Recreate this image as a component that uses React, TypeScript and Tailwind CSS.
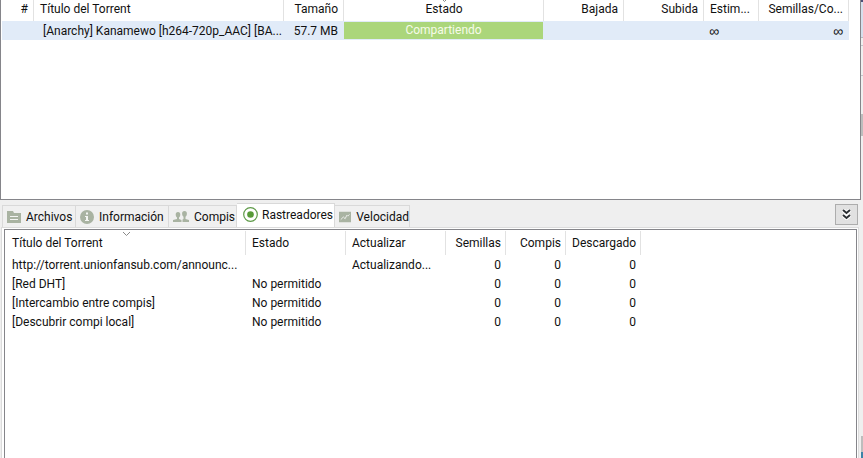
import { useState } from 'react';
import type { ReactNode } from 'react';

type Align = 'left' | 'center' | 'right';
type Column = { label: string; width: string; align: Align };

const torrentColumns: Column[] = [
  { label: '#', width: 'w-8', align: 'right' },
  { label: 'Título del Torrent', width: 'w-[250px]', align: 'left' },
  { label: 'Tamaño', width: 'w-[60px]', align: 'right' },
  { label: 'Estado', width: 'w-[200px]', align: 'center' },
  { label: 'Bajada', width: 'w-20', align: 'right' },
  { label: 'Subida', width: 'w-20', align: 'right' },
  { label: 'Estim...', width: 'w-[55px]', align: 'left' },
  { label: 'Semillas/Co...', width: 'w-[90px]', align: 'right' },
];

const trackerColumns: Column[] = [
  { label: 'Título del Torrent', width: 'w-60', align: 'left' },
  { label: 'Estado', width: 'w-[100px]', align: 'left' },
  { label: 'Actualizar', width: 'w-[100px]', align: 'left' },
  { label: 'Semillas', width: 'w-[60px]', align: 'right' },
  { label: 'Compis', width: 'w-[60px]', align: 'right' },
  { label: 'Descargado', width: 'w-[75px]', align: 'right' },
];

const trackers = [
  ['http://torrent.unionfansub.com/announc...', '', 'Actualizando...', '0', '0', '0'],
  ['[Red DHT]', 'No permitido', '', '0', '0', '0'],
  ['[Intercambio entre compis]', 'No permitido', '', '0', '0', '0'],
  ['[Descubrir compi local]', 'No permitido', '', '0', '0', '0'],
];

const alignClass: Record<Align, string> = {
  left: 'text-left',
  center: 'text-center',
  right: 'text-right',
};

function FolderIcon() {
  return (
    <svg width="14" height="12" viewBox="0 0 14 12" aria-hidden="true">
      <path d="M0 0h6l1 2h7v10H0z" fill="#a9b3a2" />
      <path d="M3 5.500h8M3 8.500h8" stroke="#f4f5f3" />
    </svg>
  );
}

function InfoIcon() {
  return (
    <svg width="14" height="14" viewBox="0 0 14 14" aria-hidden="true">
      <circle cx="7" cy="7" r="7" fill="#a9b3a2" />
      <path d="M6 2.500h2v2H6zM5 6h3v4h1v1H5v-1h1V7H5z" fill="#f4f5f3" />
    </svg>
  );
}

function PeersIcon() {
  return (
    <svg width="16" height="12" viewBox="0 0 16 12" fill="#a9b3a2" aria-hidden="true">
      <path d="M5 1c1.600 0 2.300 1 2.300 2.500S6.600 6 6 6.500V8l2.500 1v2H0V9l4-1V6.500C3.400 6 2.700 5 2.700 3.500S3.400 1 5 1z" />
      <path d="M11.500 0c1.700 0 2.400 1.100 2.400 2.700 0 1.500-.8 2.600-1.400 3.100V8l3.500 1v2H9.500V8.500l1-.5V5.800C9.900 5.300 9.100 4.200 9.100 2.700 9.100 1.100 9.800 0 11.500 0z" />
    </svg>
  );
}

function TrackerIcon() {
  return (
    <svg width="15" height="15" viewBox="0 0 15 15" aria-hidden="true">
      <circle cx="7.500" cy="7.500" r="6.800" fill="#fff" stroke="#5e9a48" strokeWidth="1.200" />
      <circle cx="7.500" cy="7.500" r="3.300" fill="#579a38" />
    </svg>
  );
}

function SpeedIcon() {
  return (
    <svg width="14" height="12" viewBox="0 0 14 12" aria-hidden="true">
      <path d="M0 0h14v12H0z" fill="#a9b3a2" />
      <path d="M2 9l3-3 2 2 2-4 1 1 2-2" fill="none" stroke="#f4f5f3" />
    </svg>
  );
}

const tabs: { label: string; width: string; icon: ReactNode }[] = [
  { label: 'Archivos', width: 'w-[74px]', icon: <FolderIcon /> },
  { label: 'Información', width: 'w-[93px]', icon: <InfoIcon /> },
  { label: 'Compis', width: 'w-[68px]', icon: <PeersIcon /> },
  { label: 'Rastreadores', width: 'w-[98px]', icon: <TrackerIcon /> },
  { label: 'Velocidad', width: 'w-[75px]', icon: <SpeedIcon /> },
];

function SortMark({ className }: { className: string }) {
  return (
    <svg className={`absolute ${className}`} width="7" height="4" viewBox="0 0 7 4" aria-hidden="true">
      <path d="M0 0l3.500 3.500L7 0" fill="none" stroke="#8a8a8a" />
    </svg>
  );
}

function Columns({ columns }: { columns: Column[] }) {
  return (
    <colgroup>
      {columns.map((c) => (
        <col key={c.label} className={c.width} />
      ))}
    </colgroup>
  );
}

function TorrentList() {
  return (
    <section className="h-[200px] border-x border-b border-[#85858a] bg-white pl-px">
      <table className="w-[847px] table-fixed border-separate border-spacing-0">
        <Columns columns={torrentColumns} />
        <thead>
          <tr className="h-[21px]">
            {torrentColumns.map((c) => (
              <th
                key={c.label}
                className={`relative border-r border-[#e2e2e2] pr-[5px] pb-[3px] pl-1.5 font-normal whitespace-nowrap ${alignClass[c.align]}`}
              >
                {c.label}
                {c.label === 'Estado' && <SortMark className="-top-[2px] left-[97px]" />}
              </th>
            ))}
          </tr>
        </thead>
        <tbody>
          <tr className="h-[19px] bg-[#e1ebf8] whitespace-nowrap">
            <td />
            <td className="pl-[9px]">[Anarchy] Kanamewo [h264-720p_AAC] [BA...</td>
            <td className="pr-1.5 text-right">57.7 MB</td>
            <td className="py-px pr-px">
              <div className="h-[17px] bg-[#abd67b] text-center leading-[17px] text-[#f6fbe9]">Compartiendo</div>
            </td>
            <td />
            <td />
            <td className="pl-[5px] font-['Liberation_Sans'] text-sm leading-4">∞</td>
            <td className="pr-1.5 text-right font-['Liberation_Sans'] text-sm leading-4">∞</td>
          </tr>
        </tbody>
      </table>
    </section>
  );
}

function TrackerTable() {
  return (
    <table className="w-[635px] table-fixed border-separate border-spacing-0">
      <Columns columns={trackerColumns} />
      <thead>
        <tr className="h-6">
          {trackerColumns.map((c) => (
            <th
              key={c.label}
              className={`relative border-r border-[#e2e2e2] pr-1 pl-1.5 font-normal whitespace-nowrap ${alignClass[c.align]}`}
            >
              {c.label}
              {c.label.startsWith('Título') && <SortMark className="top-px left-[117px]" />}
            </th>
          ))}
        </tr>
      </thead>
      <tbody>
        {trackers.map((row) => (
          <tr key={row[0]} className="h-[19px]">
            {row.map((cell, i) => (
              <td key={i} className={`pr-[5px] pl-1.5 whitespace-nowrap ${alignClass[trackerColumns[i].align]}`}>
                {cell}
              </td>
            ))}
          </tr>
        ))}
      </tbody>
    </table>
  );
}

function WindowEdge() {
  return (
    <div className="flex w-0.5 shrink-0 flex-col bg-[#efefef]">
      <div className="h-0.5 bg-[#4b5078]" />
      <div className="h-9 border-b border-[#b9bcc4] bg-[#d5dfec]" />
      <div className="h-2 border-b border-[#c4c6cb]" />
      <div className="h-[30px] border-b border-[#c4c6cb]" />
      <div className="h-[38px]" />
      <div className="h-[22px] bg-[#bdbdbd]" />
      <div className="grow" />
      <div className="h-4 bg-[#bdbdbd]" />
      <div className="h-1.5 bg-[#3c83a8]" />
    </div>
  );
}

export default function App() {
  const [active, setActive] = useState('Rastreadores');

  return (
    <div className="flex h-screen cursor-default overflow-hidden bg-[#efefef] font-[Roboto,'Noto_Sans',sans-serif] text-[12px] leading-4 text-[#111]">
      <main className="flex min-w-0 grow flex-col">
        <TorrentList />

        <div className="flex h-[27px] shrink-0 items-end justify-between pr-[3px] pl-0.5">
          <div role="tablist" className="flex items-end">
            {tabs.map((t) => (
              <button
                key={t.label}
                type="button"
                role="tab"
                aria-selected={t.label === active}
                onClick={() => setActive(t.label)}
                className={`flex shrink-0 items-center border-t border-r border-[#d9d9d9] whitespace-nowrap first:border-l ${t.width} ${
                  t.label === active ? 'h-6 gap-1 bg-white pb-0.5 pl-1.5' : 'h-[22px] gap-[5px] bg-[#f0f0f0] pl-1'
                }`}
              >
                {t.icon}
                {t.label}
              </button>
            ))}
          </div>
          <button
            type="button"
            aria-label="Ocultar panel"
            className="mb-0.5 flex h-[21px] w-[23px] items-center justify-center border border-[#adadad] bg-[#e1e1e1]"
          >
            <svg width="9" height="11" viewBox="0 0 9 11" aria-hidden="true">
              <path d="M1 1l3.500 3L8 1M1 6l3.500 3L8 6" fill="none" stroke="#fff" strokeWidth="4" />
              <path d="M1 1l3.500 3L8 1M1 6l3.500 3L8 6" fill="none" stroke="#2c3034" strokeWidth="2" />
            </svg>
          </button>
        </div>

        <section className="mr-0.5 ml-px flex grow border-x border-t border-[#dcdcdc] bg-white pt-px pr-px pl-0.5">
          <div className="grow border-x border-t border-[#85858a] pt-px pl-px">
            <TrackerTable />
          </div>
        </section>
      </main>
      <WindowEdge />
    </div>
  );
}
